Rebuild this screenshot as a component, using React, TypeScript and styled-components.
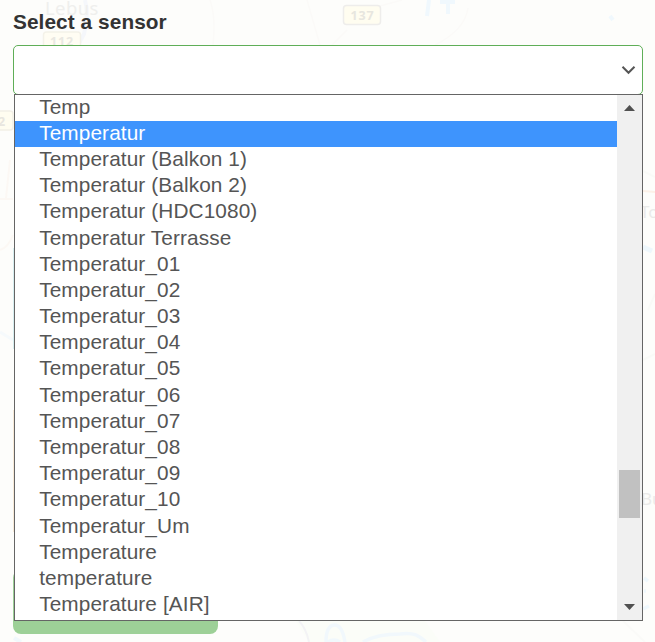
import React from "react";
import styled, { createGlobalStyle } from "styled-components";

const GlobalStyle = createGlobalStyle`
  * { box-sizing: border-box; }
  body { margin: 0; overflow: hidden; background: #fdfdfb; }
`;

const Page = styled.main`
  position: relative;
  width: 655px;
  height: 642px;
  overflow: hidden;
  padding: 9px 12px 0 13px;
  font-family: "Liberation Sans", Arial, sans-serif;
`;

const MapBackdrop = styled.svg`
  position: absolute;
  inset: 0;
  z-index: -1;
  font-family: "Noto Sans", sans-serif;
`;

const Label = styled.label`
  display: block;
  height: 36px;
  line-height: 26px;
  font-size: 20.8px;
  font-weight: 700;
  letter-spacing: 0.08px;
  color: #333;
`;

const SelectBox = styled.div`
  display: flex;
  align-items: center;
  justify-content: flex-end;
  height: 50px;
  width: 630px;
  padding-right: 6px;
  background: #fff;
  border: 1px solid #5fae57;
  border-radius: 5px;
`;

const SubmitButton = styled.button`
  display: block;
  width: 205px;
  height: 64px;
  margin-top: 475px;
  border: 0;
  border-radius: 8px;
  background: #9dd097;
`;

const Popup = styled.div`
  position: absolute;
  left: 14px;
  top: 94px;
  display: flex;
  width: 629px;
  height: 527px;
  border: 1px solid #656565;
  background: #fff;
`;

const Options = styled.ul`
  flex: 1;
  margin: 0;
  padding: 0;
  list-style: none;
  overflow: hidden;
`;

const Option = styled.li<{ $selected?: boolean }>`
  height: 26.1875px;
  padding: 0.5625px 0 0 24.2px;
  line-height: 22.25px;
  font-size: 20.8px;
  letter-spacing: 0.1px;
  white-space: nowrap;
  color: ${(p) => (p.$selected ? "#fff" : "#555")};
  background: ${(p) => (p.$selected ? "#3e94fd" : "transparent")};
`;

const Scrollbar = styled.div`
  display: flex;
  flex-direction: column;
  align-items: center;
  width: 25px;
  background: #f0f0f0;
`;

const ScrollArrow = styled.svg`
  display: block;
  width: 25px;
  height: 25px;
`;

const Track = styled.div`
  flex: 1;
  width: 21px;
  padding-top: 350px;
`;

const Thumb = styled.div`
  height: 48px;
  background: #c1c1c1;
`;

const sensors = [
  "Temp",
  "Temperatur",
  "Temperatur (Balkon 1)",
  "Temperatur (Balkon 2)",
  "Temperatur (HDC1080)",
  "Temperatur Terrasse",
  "Temperatur_01",
  "Temperatur_02",
  "Temperatur_03",
  "Temperatur_04",
  "Temperatur_05",
  "Temperatur_06",
  "Temperatur_07",
  "Temperatur_08",
  "Temperatur_09",
  "Temperatur_10",
  "Temperatur_Um",
  "Temperature",
  "temperature",
  "Temperature [AIR]",
];

function FadedMap() {
  return (
    <MapBackdrop width="655" height="642" viewBox="0 0 655 642" fill="none" aria-hidden="true">
      <path d="M85 0Q89 15 84 34L78 45" stroke="#f5f7fb" strokeWidth="4" />
      <path d="M210 0Q216 17 213 45M307 0L320 45M332 45L347 30M380 6L402 0M435 45Q465 30 468 8" stroke="#fbfaf8" strokeWidth="1.5" />
      <path d="M429 0L427 16M440 2H455M448 3V14M610 16L613 20" stroke="#f0f8fd" strokeWidth="4" />
      <g fontWeight="700" fontSize="12.5" letterSpacing="0.8">
        <rect x="43.5" y="32" width="37" height="19" rx="3" fill="#fffdf3" stroke="#f4f2e9" strokeWidth="1.5" />
        <text x="50" y="46" fill="#e9e8e2">112</text>
        <rect x="343.5" y="5.5" width="37" height="19" rx="3" fill="#fffdf0" stroke="#eeedeb" strokeWidth="1.5" />
        <text x="350.5" y="20" fill="#e7e6df">137</text>
        <rect x="-20" y="111" width="33" height="19" rx="3" fill="#fffdf0" stroke="#f2efe6" strokeWidth="1.5" />
        <text x="-2" y="126" fill="#e8e6df">2</text>
      </g>
      <text x="45" y="15" fontSize="18.5" letterSpacing="0.4" fill="#efefed">Lebus</text>
      <text x="285" y="57" fontSize="17" fill="#efefed">Nowy Młyn</text>
      <path d="M0 199H13M6 198L10 160M0 250Q8 248 13 235" stroke="#fcf8f4" strokeWidth="2" />
      <path d="M0 332L13 340" stroke="#f6fafc" strokeWidth="3" />
      <path d="M13.5 248V349" stroke="#d7eef0" />
      <path d="M13.5 410V532" stroke="#f7ead8" />
      <path d="M643 191L655 192" stroke="#fcf1e8" strokeWidth="2" />
      <path d="M643 171L655 177M643 360L655 354M648 310L655 294" stroke="#f9faf7" strokeWidth="2" />
      <path d="M643 247L652 251" stroke="#eef7fc" strokeWidth="5" />
      <text x="640" y="218" fontSize="17" fill="#eaeae9">To</text>
      <text x="641" y="505" fontSize="17" fill="#eaeae9">Bu</text>
      <path d="M644 578L648 581M644 591H646M643 609L649 606" stroke="#eff8fd" strokeWidth="3.5" />
      <path d="M296 621H425L440 642H309Z" fill="#fbfdf8" />
      <path d="M299 621Q306 628 309 642" stroke="#f3f3f5" strokeWidth="2" />
      <path d="M326 642Q326 626 334 625Q342 624 345 642M328 642Q334 638 340 642M363 642Q377 634 400 634C416 632 420 637 426 642" stroke="#f1f8fc" strokeWidth="3.5" />
      <path d="M623 621L645 642" stroke="#fafaf8" strokeWidth="2" />
      <path d="M14 638L21 642" stroke="#f1f8fc" strokeWidth="4" />
    </MapBackdrop>
  );
}

export default function App() {
  return (
    <>
      <GlobalStyle />
      <Page>
        <FadedMap />
        <Label>Select a sensor</Label>
        <SelectBox role="combobox" aria-expanded="true" aria-label="Select a sensor">
          <svg width="15" height="10" viewBox="0 0 15 10" fill="none">
            <path d="M1.5 1.8L7.5 7.8L13.5 1.8" stroke="#555" strokeWidth="2" />
          </svg>
        </SelectBox>
        <SubmitButton aria-label="Submit" />
        <Popup>
          <Options role="listbox">
            {sensors.map((name) => (
              <Option key={name} role="option" $selected={name === "Temperatur"}>
                {name}
              </Option>
            ))}
          </Options>
          <Scrollbar>
            <ScrollArrow viewBox="0 0 25 25">
              <path d="M7 16L12.5 10L18 16Z" fill="#505050" />
            </ScrollArrow>
            <Track>
              <Thumb />
            </Track>
            <ScrollArrow viewBox="0 0 25 25">
              <path d="M7 9L12.5 15L18 9Z" fill="#505050" />
            </ScrollArrow>
          </Scrollbar>
        </Popup>
      </Page>
    </>
  );
}
